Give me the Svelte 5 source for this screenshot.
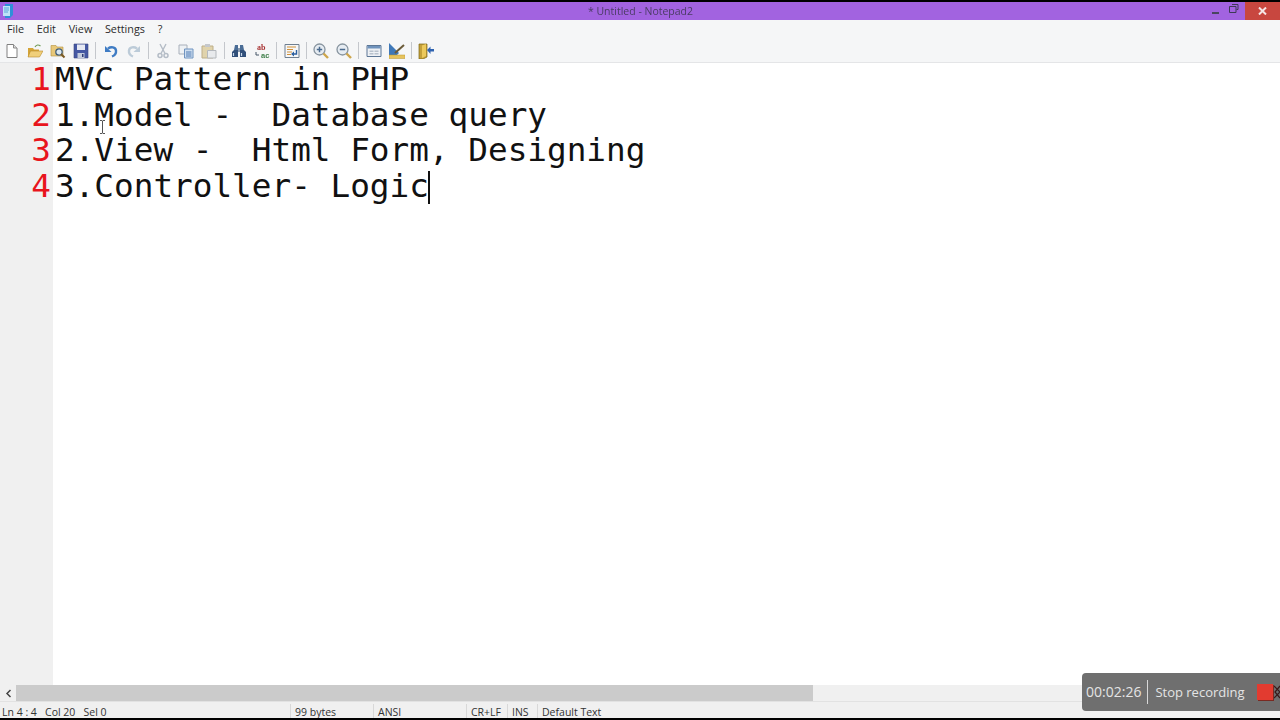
<script>
  const lines = [
    'MVC Pattern in PHP',
    '1.Model -  Database query',
    '2.View -  Html Form, Designing',
    '3.Controller- Logic'
  ];
  const menus = ['File', 'Edit', 'View', 'Settings', '?'];
</script>

<div class="window">
  <header class="titlebar">
    <svg class="app-icon" width="14" height="16" viewBox="0 0 14 16">
      <path d="M3 1h8v11l-3 3H3z" fill="#2f8fd8" />
      <path d="M1 3h7v10H1z" fill="#bfe4f8" />
      <path d="M2 5h5M2 7h5M2 9h4" stroke="#5aa6d8" />
    </svg>
    <span class="title">* Untitled - Notepad2</span>
    <div class="controls">
      <span class="min"></span>
      <svg class="restore" width="10" height="9" viewBox="0 0 10 9">
        <path d="M3 .5h6v5H7.500M.5 2.500h6.500v6h-6.500z" fill="none" stroke="#3d3a55" />
      </svg>
      <span class="close">
        <svg width="9" height="8" viewBox="0 0 9 8">
          <path d="M1 .5l7 7M8 .5l-7 7" stroke="#f6e6e6" stroke-width="2" />
        </svg>
      </span>
    </div>
  </header>

  <nav class="menubar">
    {#each menus as m}
      <span>{m}</span>
    {/each}
  </nav>

  <div class="toolbar">
    <!-- new -->
    <svg class="ico" viewBox="0 0 16 16"><path d="M3 1.500h6.500l3.500 3.500v9.500H3z" fill="#fff" stroke="#808080" /><path d="M9.500 1.500V5H13" fill="#dedede" stroke="#8a8a8a" /></svg>
    <!-- open -->
    <svg class="ico" viewBox="0 0 16 16"><path d="M1 5h5l1 1.500h5V14H1z" fill="#d4a437" /><path d="M3.500 8H16l-3.500 6H1z" fill="#f0cf7a" stroke="#b98b2b" stroke-width=".6" /><path d="M8 4c1.500-2.500 3.500-2.500 5.500-1" fill="none" stroke="#6f9a55" stroke-width="1.200" /></svg>
    <!-- browse -->
    <svg class="ico" viewBox="0 0 16 16"><path d="M1 2.500h5L7 4h6v9H1z" fill="#e8c879" stroke="#b4923e" stroke-width=".6" /><circle cx="9" cy="9" r="3.200" fill="#dbe8f2" stroke="#44607a" stroke-width="1.300" /><path d="M11 11l3.500 3.500" stroke="#7a5a25" stroke-width="2" /></svg>
    <!-- save -->
    <svg class="ico" viewBox="0 0 16 16"><path d="M1 1h14v14H1z" fill="#4558a3" stroke="#39467f" stroke-width=".6" /><path d="M4 1.500h8V7H4z" fill="#e6e9f3" /><path d="M4.500 10h7v5h-7z" fill="#c3cbdc" /><path d="M9 11h1.500v3H9z" fill="#2e3c78" /></svg>
    <i class="sep"></i>
    <!-- undo -->
    <svg class="ico" viewBox="0 0 16 16"><path d="M5 5.500c3-2 7.500-1.500 8 2 .3 2.500-1.500 5-4 6" fill="none" stroke="#3f7cc4" stroke-width="2.400" /><path d="M2 3v6h6.500z" fill="#3f7cc4" /></svg>
    <!-- redo, disabled -->
    <svg class="ico" viewBox="0 0 16 16"><path d="M11 5.500c-3-2-7.500-1.500-8 2-.3 2.500 1.500 5 4 6" fill="none" stroke="#bccbd8" stroke-width="2.400" /><path d="M14 3v6H7.500z" fill="#bccbd8" /></svg>
    <i class="sep"></i>
    <!-- cut -->
    <svg class="ico" viewBox="0 0 16 16"><path d="M5 1l5 9.500M11 1l-5 9.500" stroke="#b4bcc6" stroke-width="1.400" /><circle cx="5" cy="12.500" r="2" fill="none" stroke="#b4bcc6" stroke-width="1.500" /><circle cx="11" cy="12.500" r="2" fill="none" stroke="#b4bcc6" stroke-width="1.500" /></svg>
    <!-- copy -->
    <svg class="ico" viewBox="0 0 16 16"><path d="M1 2h8v9H1z" fill="#eef1f4" stroke="#a8b0ba" /><path d="M6.500 6h8.500v9H6.500z" fill="#cfdff0" stroke="#6f93c0" /><path d="M8 9h5.500M8 11h5.500M8 13h5.500" stroke="#4f7ab3" /></svg>
    <!-- paste -->
    <svg class="ico" viewBox="0 0 16 16"><path d="M1 3h11v12H1z" fill="#e0d3ac" stroke="#bdae88" /><path d="M4 1h5v3H4z" fill="#c5c8cc" /><path d="M6.500 7.500H15V15H6.500z" fill="#e8eaec" stroke="#b4b8bd" /></svg>
    <i class="sep"></i>
    <!-- find -->
    <svg class="ico" viewBox="0 0 16 16"><path d="M3 7l1-5h3v5zM13 7l-1-5H9v5z" fill="#4a6d96" /><path d="M1 9l2-2h4v7H1zM15 9l-2-2H9v7h6z" fill="#31507a" /><path d="M7 5h2v4H7z" fill="#8a9bb0" /><path d="M2.500 10v3M10.500 10v3" stroke="#c6d7ea" stroke-width="1.200" /></svg>
    <!-- replace -->
    <svg class="ico" viewBox="0 0 16 16"><text x="3" y="6.500" class="ab">ab</text><text x="7" y="14.500" class="ac">ac</text><path d="M2 9v3h3" fill="none" stroke="#456" /></svg>
    <i class="sep"></i>
    <!-- wrap -->
    <svg class="ico" viewBox="0 0 16 16"><path d="M1 1.500h14v13H1z" fill="#f6f7f8" stroke="#6f7f90" /><path d="M3 4h9M3 6.500h6M3 9h5M3 11.500h4" stroke="#d0913a" stroke-width="1.100" /><path d="M12.500 7v4H9" fill="none" stroke="#2c5f9e" stroke-width="1.400" /><path d="M10 8.500V13.500L7 11z" fill="#2c5f9e" /></svg>
    <i class="sep"></i>
    <!-- zoom in -->
    <svg class="ico" viewBox="0 0 16 16"><circle cx="6.500" cy="6.500" r="5.500" fill="#e6ecf2" stroke="#87949f" stroke-width="1.300" /><path d="M3.800 6.500h5.400M6.500 3.800v5.400" stroke="#4a6a8e" stroke-width="1.500" /><path d="M10.500 10.500l4.500 4.500" stroke="#cda64c" stroke-width="2.400" /></svg>
    <!-- zoom out -->
    <svg class="ico" viewBox="0 0 16 16"><circle cx="6.500" cy="6.500" r="5.500" fill="#e6ecf2" stroke="#87949f" stroke-width="1.300" /><path d="M3.800 6.500h5.400" stroke="#4a6a8e" stroke-width="1.500" /><path d="M10.500 10.500l4.500 4.500" stroke="#cda64c" stroke-width="2.400" /></svg>
    <i class="sep"></i>
    <!-- scheme -->
    <svg class="ico" viewBox="0 0 16 16"><path d="M1 2.500h14v11H1z" fill="#eef1f5" stroke="#5d7796" /><path d="M1.500 3H14.500v2.500H1.500z" fill="#6f93bd" /><path d="M3.500 7.500h4v1.500h-4zM8.500 7.500h4v1.500h-4zM3.500 10h4v1.500h-4zM8.500 10h4v1.500h-4z" fill="#b8c2cd" /></svg>
    <!-- customize -->
    <svg class="ico" viewBox="0 0 16 16"><path d="M0 0l10 10-3 3H0z" fill="#3f78b8" /><path d="M0 12h16v3.500H0z" fill="#e7c35c" stroke="#b8952f" stroke-width=".5" /><path d="M6 10L15 2" stroke="#6a5a38" stroke-width="2" /></svg>
    <i class="sep"></i>
    <!-- exit -->
    <svg class="ico" viewBox="0 0 16 16"><path d="M1 1h8v13L5 16H1z" fill="#c4a03a" stroke="#7c6414" stroke-width=".7" /><path d="M4 2.500l4-1.500v12l-4 2z" fill="#ecc95c" /><path d="M9 7l3.500-3.500V6H16v2.500h-3.500V11z" fill="#2e62b0" /></svg>
  </div>

  <main class="editor">
    <div class="gutter">
      {#each lines as _, i}
        <div class="num">{i + 1}</div>
      {/each}
    </div>
    <div class="code">
      {#each lines as line, i}
        <div class="line">{line}{#if i === lines.length - 1}<span class="caret"></span>{/if}</div>
      {/each}
    </div>
    <!-- mouse pointer -->
    <svg class="ibeam" width="7" height="14" viewBox="0 0 7 14">
      <path d="M1 .5h2l.5.5.5-.5h2M3.500 1v12M1 13.500h2l.5-.5.5.5h2" fill="none" stroke="#555" />
    </svg>
  </main>

  <div class="hscroll">
    <span class="arrow">
      <svg width="7" height="9" viewBox="0 0 7 9"><path d="M5.500 1L2 4.500 5.500 8" fill="none" stroke="#444" stroke-width="1.500" /></svg>
    </span>
    <div class="track"><div class="thumb"></div></div>
  </div>

  <footer class="statusbar">
    <span class="s pos">Ln 4 : 4 &nbsp; Col 20 &nbsp; Sel 0</span>
    <span class="s bytes">99 bytes</span>
    <span class="s enc">ANSI</span>
    <span class="s eol">CR+LF</span>
    <span class="s ins">INS</span>
    <span class="s lex">Default Text</span>
  </footer>

  <div class="recorder">
    <span class="time">00:02:26</span>
    <span class="stop">Stop recording</span>
    <span class="rec"></span>
    <svg class="grip" width="8" height="14" viewBox="0 0 8 14"><path d="M0 1l6 6-6 6M6 1L1 7l5 6" fill="none" stroke="#3a1a1a" stroke-width="1.200" /></svg>
  </div>
</div>

<style>
  :global(body) {
    margin: 0;
    background: #000;
  }
  .window {
    position: relative;
    width: 1280px;
    height: 720px;
    overflow: hidden;
    display: flex;
    flex-direction: column;
    background: #fff;
    border-top: 2px solid #000;
    border-bottom: 2px solid #000;
    box-sizing: border-box;
    font-family: "Open Sans", "Noto Sans", sans-serif;
  }
  .titlebar {
    height: 18px;
    flex: none;
    background: #a263e0;
    display: flex;
    align-items: center;
    position: relative;
  }
  .app-icon {
    margin-left: 2px;
  }
  .title {
    position: absolute;
    left: 0;
    right: 0;
    text-align: center;
    font-size: 10.5px;
    color: #3c3550;
    padding-left: 1px;
    opacity: 0.85;
  }
  .controls {
    margin-left: auto;
    display: flex;
    align-items: center;
    height: 100%;
    position: relative;
  }
  .min {
    width: 7px;
    height: 2px;
    background: #4a4560;
    margin-right: 10px;
    margin-top: 3px;
  }
  .restore {
    margin-right: 6px;
    margin-bottom: 5px;
  }
  .close {
    width: 35px;
    height: 100%;
    background: #c8473f;
    display: flex;
    align-items: center;
    justify-content: center;
  }
  .menubar {
    height: 19px;
    flex: none;
    background: #f5f6f7;
    display: flex;
    align-items: center;
    padding: 0 0 2px 7px;
    box-sizing: border-box;
    gap: 12.700px;
    font-size: 10.800px;
    color: #2a2a2a;
  }
  .toolbar {
    height: 24px;
    flex: none;
    background: #f5f6f7;
    border-bottom: 1px solid #e4e5e7;
    box-sizing: border-box;
    display: flex;
    align-items: center;
    padding-left: 4px;
    gap: 7px;
  }
  .ico {
    width: 16px;
    height: 16px;
    flex: none;
    filter: blur(0.3px);
  }
  .sep {
    width: 1px;
    height: 17px;
    background: #c4c7cc;
    flex: none;
    margin: 0 -0.700px;
  }
  .ab {
    font: bold 8px "Liberation Serif", serif;
    fill: #a83232;
  }
  .ac {
    font: bold 7.500px "Liberation Sans", sans-serif;
    fill: #3f7f4a;
  }
  .editor {
    flex: 1;
    min-height: 0;
    display: flex;
    position: relative;
    font-family: "DejaVu Sans Mono", "Liberation Mono", monospace;
    font-size: 32.700px;
    line-height: 35.500px;
  }
  .gutter {
    width: 53px;
    flex: none;
    background: #f0f0f0;
    box-sizing: border-box;
    padding: 0 2px 0 0;
    text-align: right;
    color: #e8141c;
  }
  .num:first-child,
  .line:first-child {
    margin-top: -1px;
  }
  .code {
    flex: 1;
    padding-left: 2px;
    color: #111;
    white-space: pre;
  }
  .caret {
    display: inline-block;
    width: 2px;
    height: 33px;
    margin-left: -1px;
    background: #111;
    vertical-align: -7px;
  }
  .ibeam {
    position: absolute;
    left: 99px;
    top: 57px;
  }
  .hscroll {
    height: 16px;
    flex: none;
    display: flex;
    background: #f0f0f0;
  }
  .arrow {
    width: 16px;
    display: flex;
    align-items: center;
    justify-content: center;
  }
  .track {
    flex: 1;
  }
  .thumb {
    width: 797px;
    height: 100%;
    background: #cbcbcb;
  }
  .statusbar {
    height: 17px;
    flex: none;
    background: #f0f0f0;
    border-top: 1px solid #e2e2e2;
    box-sizing: border-box;
    display: flex;
    align-items: flex-end;
    font-size: 10.500px;
    color: #333;
    white-space: nowrap;
  }
  .s {
    box-sizing: border-box;
    padding: 2px 0 0 4px;
    line-height: 12px;
    border-left: 1px solid #d8d8d8;
  }
  .pos { width: 290px; border-left: none; padding-left: 2px; }
  .bytes { width: 83px; }
  .enc { width: 93px; }
  .eol { width: 41px; }
  .ins { width: 30px; }
  .lex { flex: 1; }
  .recorder {
    position: absolute;
    left: 1082px;
    top: 671px;
    width: 198px;
    height: 38px;
    background: #6f6f6f;
    border-radius: 4px 0 0 4px;
    display: flex;
    align-items: center;
    font-size: 14px;
    color: #e4e4e4;
    white-space: nowrap;
  }
  .time {
    padding: 0 6px 0 4px;
    line-height: 24px;
    border-right: 1px solid #d8d8d8;
  }
  .stop {
    margin-left: 7px;
    font-size: 13px;
    width: 90px;
  }
  .rec {
    width: 16px;
    height: 16px;
    margin-left: 12px;
    background: #e23b30;
    box-shadow: 1px 1px 0 #7a2a22;
    flex: none;
  }
  .grip {
    flex: none;
    margin-left: 1px;
  }
</style>
